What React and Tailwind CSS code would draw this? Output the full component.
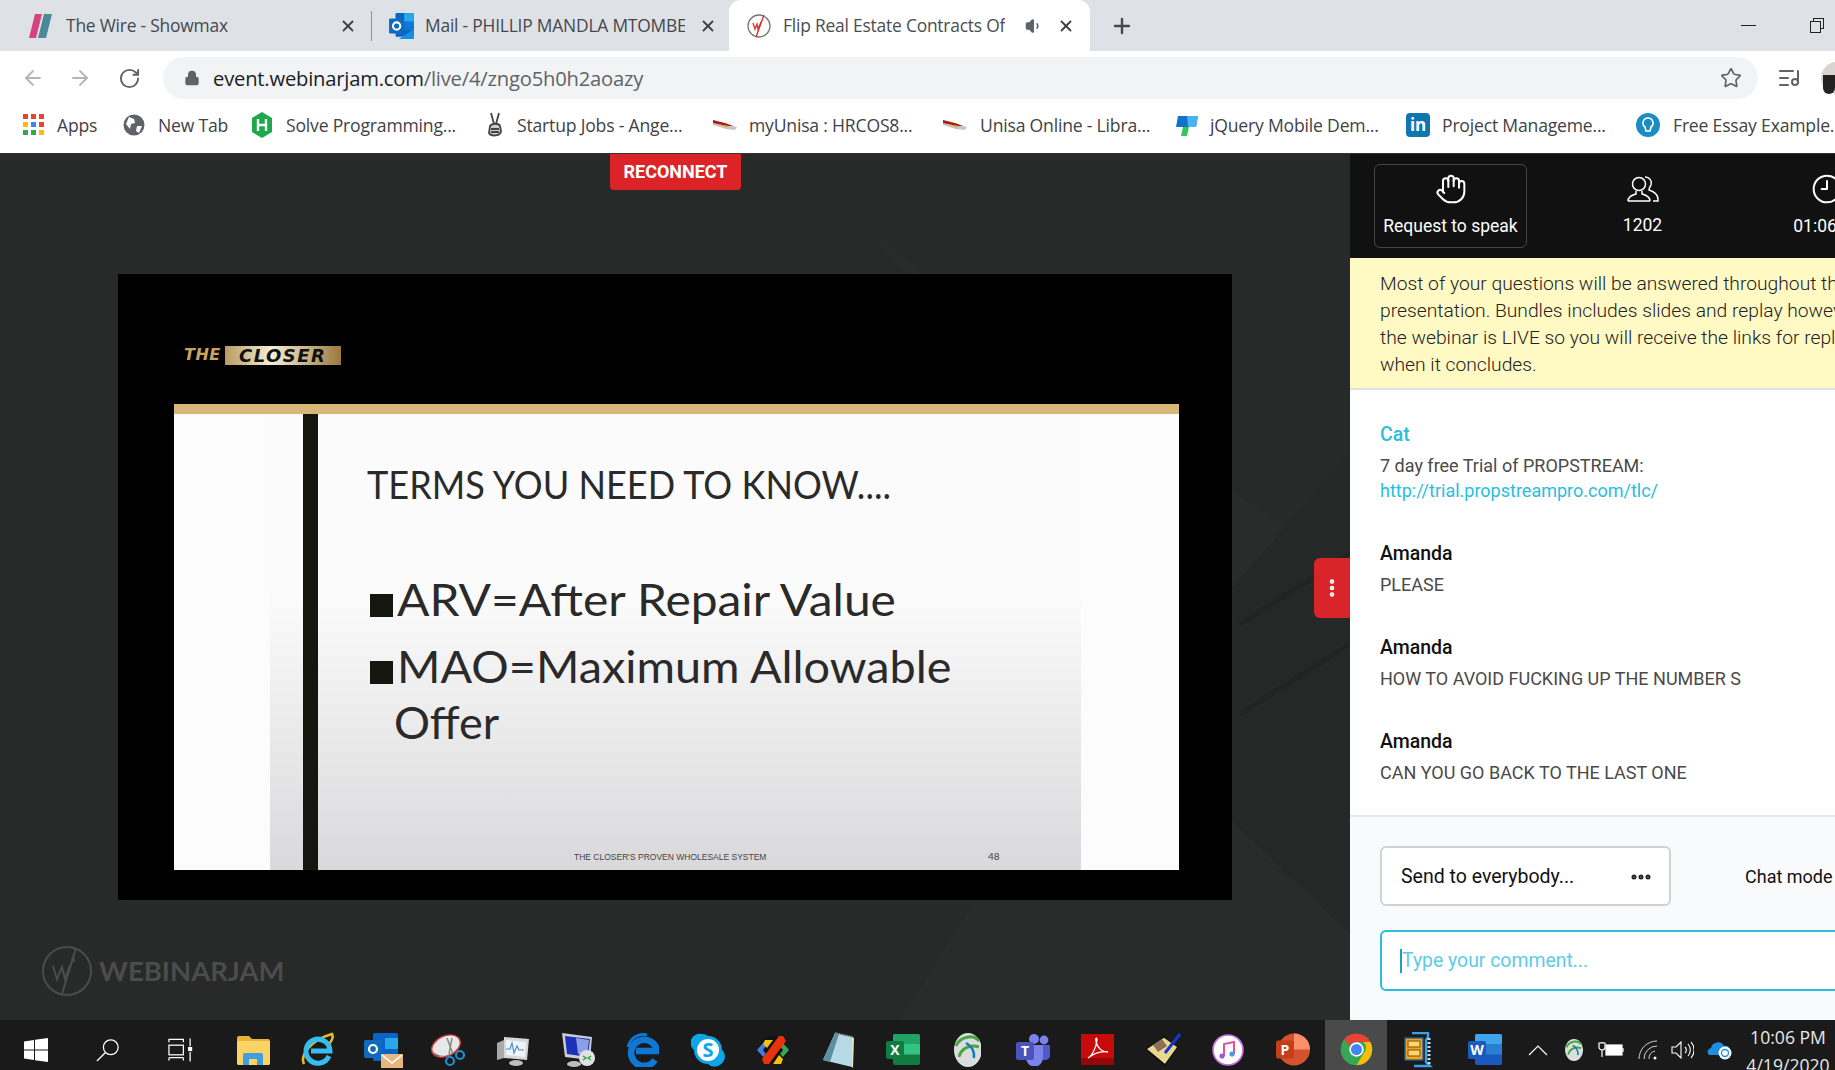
import { ArrowLeft, ArrowRight, RotateCw, Lock, Star, X, Plus, Volume1, ListMusic, EllipsisVertical, Ellipsis, Hand, Clock9 } from 'lucide-react';

const ui = { fontFamily: '"Open Sans", sans-serif' };

const ShowmaxIcon = () => (
  <svg width="28" height="26" viewBox="0 0 28 26">
    <path d="M7 1h7L8 25H1z" fill="#d8437f" />
    <path d="M16 1h8l-6 24h-8z" fill="#4a8a96" />
  </svg>
);

const OutlookIcon = ({ size = 28 }) => (
  <svg width={size} height={size} viewBox="0 0 26 26">
    <rect x="7" y="1" width="17" height="22" rx="1" fill="#0a64c8" />
    <rect x="15" y="1" width="9" height="8" fill="#28a8ea" />
    <rect x="15" y="9" width="9" height="8" fill="#0f78d4" />
    <rect x="1" y="6" width="14" height="14" rx="1" fill="#0f6cbd" />
    <circle cx="8" cy="13" r="3.4" fill="none" stroke="#fff" strokeWidth="2" />
    <path d="M10 25l14-9v9z" fill="#1490df" />
  </svg>
);

const JamFavicon = () => (
  <svg width="26" height="26" viewBox="0 0 26 26" fill="none">
    <circle cx="13" cy="13" r="11" stroke="#777" strokeWidth="1.3" />
    <path d="M18 2L10 24" stroke="#d9332b" strokeWidth="1.4" />
    <path d="M7 10l2 6 2-5 1 5 3-7" stroke="#d9332b" strokeWidth="1.3" />
  </svg>
);

const AppsIcon = () => {
  const colors = ['#ea4335', '#ea4335', '#ea4335', '#fbbc05', '#4285f4', '#ea4335', '#34a853', '#34a853', '#fbbc05'];
  return (
    <div className="grid grid-cols-3 gap-[3px]">
      {colors.map((c, i) => (
        <div key={i} className="h-[5px] w-[5px]" style={{ backgroundColor: c }} />
      ))}
    </div>
  );
};

const GlobeIcon = () => (
  <svg width="22" height="22" viewBox="0 0 22 22">
    <circle cx="11" cy="11" r="10.5" fill="#5f6368" />
    <path d="M6 3l5 2 1 4-4 1-1 5-4-5zM14 12l5 0-3 7-3-2z" fill="#fff" />
  </svg>
);

const HackerrankIcon = () => (
  <svg width="22" height="26" viewBox="0 0 22 26">
    <path d="M11 0l10 6v14l-10 6-10-6V6z" fill="#1ba94c" />
    <path d="M7 7v12M15 7v12M7 13h8" stroke="#fff" strokeWidth="2.4" />
  </svg>
);

const PeaceIcon = () => (
  <svg width="20" height="28" viewBox="0 0 20 28" fill="none" stroke="#444" strokeWidth="1.8">
    <path d="M6 2l3 11M14 2l-3 11" />
    <path d="M5 15c2-3 9-3 10 0l1 5c0 5-10 6-12 2z" fill="#cfcfcf" />
    <path d="M6 18h8M6 21h8" />
  </svg>
);

const UnisaIcon = () => (
  <svg width="26" height="14" viewBox="0 0 26 14">
    <path d="M1 3l9 2 15 4-2 3-9-1-13-4z" fill="#c9c5c5" />
    <path d="M1 2l12 3 8 3-6 0-14-3z" fill="#a51c1c" />
    <path d="M5 6l12 2-3 1z" fill="#d9a520" />
  </svg>
);

const JqueryIcon = () => (
  <svg width="24" height="24" viewBox="0 0 24 24">
    <path d="M3 3h20l-2 11H1z" fill="#1173c5" />
    <path d="M12 3h11l-2 11h-8z" fill="#49b3f0" />
    <path d="M8 14h6l-2 9H6z" fill="#34c759" />
  </svg>
);

const LinkedinIcon = () => (
  <div className="flex h-6 w-6 items-center justify-center rounded-sm bg-[#0f76b0] text-[17px] font-bold leading-none text-white" style={ui}>
    in
  </div>
);

const BulbIcon = () => (
  <svg width="24" height="24" viewBox="0 0 24 24" fill="none">
    <circle cx="12" cy="12" r="12" fill="#1c8dc4" />
    <path d="M12 5a5 5 0 0 0-3 9l1 4h4l1-4a5 5 0 0 0-3-9z" stroke="#fff" strokeWidth="1.6" />
  </svg>
);

const WjLogo = ({ size = 50, color = '#4b4c4c' }) => (
  <svg width={size} height={size} viewBox="0 0 50 50" fill="none" stroke={color} strokeWidth="2">
    <circle cx="25" cy="25" r="24" />
    <path d="M34 2L20 48" />
    <path d="M11 20l4 13 5-12 3 12 5-14" />
    <circle cx="31" cy="14" r="1.2" fill={color} />
  </svg>
);

const PeopleIcon = () => (
  <svg width="34" height="30" viewBox="0 0 34 30" fill="none" stroke="#fff" strokeWidth="1.5">
    <circle cx="13" cy="10" r="6.5" />
    <path d="M2 27c0-5 5-6 8-7v-3M24 27c0-5-5-6-8-7v-3M2 27h22" />
    <path d="M19 3a6 6 0 0 1 6 8c-1 2-2 3-2 5 3 1 9 3 9 9v2h-5" />
  </svg>
);

const Tile = ({ children }) => (
  <div className="flex h-[50px] w-[65px] shrink-0 items-center justify-center pt-[9px]">{children}</div>
);

// Taskbar app icons, all drawn on a 36 box
const Folder = () => (
  <svg width="34" height="30" viewBox="0 0 34 30">
    <path d="M1 3a2 2 0 0 1 2-2h10l3 3h16a2 2 0 0 1 2 2v22a2 2 0 0 1-2 2H3a2 2 0 0 1-2-2z" fill="#e8b23c" />
    <rect x="1" y="6" width="33" height="24" rx="2" fill="#fad365" />
    <path d="M7 30V20a2 2 0 0 1 2-2h16a2 2 0 0 1 2 2v10h-6v-6h-8v6z" fill="#3f9fe3" />
  </svg>
);
const IeIcon = () => (
  <svg width="36" height="36" viewBox="0 0 36 36" fill="none">
    <path d="M4 32C0 24 10 8 32 2c2 3-1 8-3 10" stroke="#e8b923" strokeWidth="2.6" />
    <path d="M29 24a12 12 0 1 1 1-5H11" stroke="#35bdf0" strokeWidth="5" />
  </svg>
);
const OutlookTask = () => (
  <svg width="40" height="36" viewBox="0 0 40 36">
    <rect x="10" y="1" width="25" height="28" rx="2" fill="#0a64c8" />
    <rect x="22" y="6" width="13" height="11" fill="#28a8ea" />
    <rect x="1" y="8" width="18" height="18" rx="2" fill="#0f6cbd" />
    <circle cx="10" cy="17" r="4" fill="none" stroke="#fff" strokeWidth="2.2" />
    <rect x="18" y="22" width="22" height="14" fill="#e8b77e" />
    <path d="M19 23l10 8 10-8" fill="none" stroke="#fff" strokeWidth="1.6" />
  </svg>
);
const Snip = () => (
  <svg width="34" height="36" viewBox="0 0 34 36" fill="none">
    <ellipse cx="15" cy="14" rx="15" ry="10" transform="rotate(-25 15 14)" fill="#e8e8e8" stroke="#d33b3b" strokeWidth="1.4" />
    <path d="M1 18c4 6 12 8 20 3l-3 3H5z" fill="#6e6e6e" />
    <path d="M16 6l6 16M21 6l-3 16" stroke="#888" strokeWidth="1.5" />
    <circle cx="19" cy="29" r="4" stroke="#1f8fd0" strokeWidth="2.2" />
    <circle cx="29" cy="23" r="4" stroke="#1f8fd0" strokeWidth="2.2" />
  </svg>
);
const PerfMon = () => (
  <svg width="34" height="32" viewBox="0 0 34 32" fill="none">
    <path d="M8 3l25 2-2 21-23-2z" fill="#d5d8da" />
    <path d="M10 6l20 2-1 15-19-2z" fill="#eef4f8" />
    <path d="M10 15l4 0 2-6 2 10 3-7 2 4 5 0" stroke="#4b8ec8" strokeWidth="1.2" />
    <path d="M1 9l7-3v18l-7 2z" fill="#aaa" />
    <ellipse cx="20" cy="29" rx="7" ry="3" fill="#bdbdbd" />
  </svg>
);
const Rdp = () => (
  <svg width="36" height="36" viewBox="0 0 36 36">
    <path d="M2 1l30 4-2 23-25-3z" fill="#c9cdd2" />
    <path d="M5 4l25 3-2 18-21-3z" fill="#1c2fb8" />
    <path d="M16 6l13 2-2 16-9-2z" fill="#8ba0e4" />
    <ellipse cx="14" cy="32" rx="7" ry="3" fill="#bdbdbd" />
    <circle cx="27" cy="26" r="8" fill="#dfe3df" />
    <path d="M23 24l3 2-3 2M31 24l-3 2 3 2" stroke="#2f9e44" strokeWidth="1.4" fill="none" />
  </svg>
);
const EdgeIcon = () => (
  <svg width="32" height="34" viewBox="0 0 32 34" fill="none">
    <path d="M28 27a13 13 0 1 1 2-9H9" stroke="#0f78d4" strokeWidth="6.5" />
    <path d="M1 14C4 4 12 0 20 2" stroke="#0f78d4" strokeWidth="3" />
  </svg>
);
const SkypeIcon = () => (
  <svg width="34" height="34" viewBox="0 0 34 34">
    <path d="M10 1a9 9 0 0 1 7 2 14 14 0 0 1 14 14 9 9 0 0 1-1 14 9 9 0 0 1-13 0A14 14 0 0 1 3 17 9 9 0 0 1 10 1z" fill="#0fa5e9" />
    <circle cx="17" cy="17" r="11" fill="#fff" />
    <text x="17" y="24" textAnchor="middle" fontSize="20" fontWeight="700" fill="#0fa5e9" style={ui}>S</text>
  </svg>
);
const MultiIcon = () => (
  <svg width="36" height="30" viewBox="0 0 36 30">
    <circle cx="18" cy="15" r="14" fill="#111" />
    <path d="M2 15l6-7 3 3-3 4 3 4-3 3z" fill="#3f7ce0" />
    <path d="M34 15l-6-7-3 3 3 4-3 4 3 3z" fill="#35a853" />
    <path d="M10 5h8l-6 8-4-4zM18 29h8l2-5-4-4z" fill="#f4c20d" />
    <path d="M24 1h4l3 5-17 23H9l-2-5z" fill="#e8320e" />
  </svg>
);
const NotepadIcon = () => (
  <svg width="34" height="36" viewBox="0 0 34 36">
    <path d="M14 1l18 4-1 30L2 28z" fill="#b7dbe6" />
    <path d="M2 28L14 1l4 1L9 30z" fill="#5d8fa3" />
    <path d="M31 5l2 1-1 30-1-1z" fill="#e3e3c8" />
    <path d="M14 1l18 4" stroke="#888" strokeWidth="2" strokeDasharray="1 1" />
  </svg>
);
const OfficeIcon = ({ letter, tints, badge }) => (
  <svg width="36" height="33" viewBox="0 0 36 33">
    <rect x="8" y="1" width="27" height="31" rx="2" fill={tints[2]} />
    <rect x="8" y="1" width="27" height="10.5" rx="2" fill={tints[0]} />
    <rect x="8" y="11" width="27" height="10.5" fill={tints[1]} />
    <rect x="1" y="8" width="18" height="18" rx="2" fill={badge} />
    <text x="10" y="22" textAnchor="middle" fontSize="14" fontWeight="700" fill="#fff" style={ui}>{letter}</text>
  </svg>
);
const AvayaGlobe = ({ size = 34 }) => (
  <svg width={size * 0.82} height={size} viewBox="0 0 28 34" fill="none">
    <ellipse cx="14" cy="17" rx="14" ry="17" fill="#d9dee0" />
    <path d="M2 13C6 3 20 1 25 8M5 24c2-8 10-13 20-10" stroke="#4aa63d" strokeWidth="3" />
    <path d="M12 10c5 2 9 8 8 15" stroke="#1a78b8" strokeWidth="2.4" />
  </svg>
);
const TeamsIcon = () => (
  <svg width="36" height="32" viewBox="0 0 36 32">
    <circle cx="29" cy="6" r="4.4" fill="#7b83eb" />
    <circle cx="19" cy="5" r="5" fill="#7b83eb" />
    <path d="M24 11h11v9a5 5 0 0 1-8 5z" fill="#5059c9" />
    <path d="M11 11h17v13a8 8 0 0 1-17 0z" fill="#7b83eb" />
    <rect x="1" y="8" width="18" height="18" rx="2" fill="#4b53bc" />
    <text x="10" y="22" textAnchor="middle" fontSize="14" fontWeight="700" fill="#fff" style={ui}>T</text>
  </svg>
);
const AcrobatIcon = () => (
  <svg width="33" height="31" viewBox="0 0 33 31" fill="none">
    <rect width="33" height="31" fill="#c80a0a" />
    <rect y="24" width="33" height="7" fill="#950606" />
    <path d="M7 24c4-2 8-10 9-18 0-3-2-2-1 1 1 7 6 11 12 11-5-1-12 0-20 6z" stroke="#fff" strokeWidth="1.3" />
  </svg>
);
const NotesIcon = () => (
  <svg width="36" height="36" viewBox="0 0 36 36">
    <path d="M1 17L19 5l14 10-13 18z" fill="#e8d98c" stroke="#111" strokeWidth="1.4" />
    <path d="M8 13l9-6 5 7-9 6z" fill="#8c6f5b" />
    <path d="M20 21L35 2" stroke="#1537c9" strokeWidth="3" />
    <path d="M4 20l16 13" stroke="#111" strokeWidth="1.6" />
  </svg>
);
const ItunesIcon = () => (
  <svg width="32" height="32" viewBox="0 0 32 32" fill="none">
    <circle cx="16" cy="16" r="15" fill="#fff" stroke="#c46ee0" strokeWidth="1.6" />
    <path d="M12 22V10l10-2v12" stroke="#e24fa0" strokeWidth="2" />
    <circle cx="10" cy="22" r="2.6" fill="#9a5ae0" />
    <circle cx="20" cy="20" r="2.6" fill="#3f9fe8" />
  </svg>
);
const PptIcon = () => (
  <svg width="36" height="33" viewBox="0 0 36 33">
    <circle cx="19" cy="16.5" r="16" fill="#d35230" />
    <path d="M19 .5a16 16 0 0 1 16 16H19z" fill="#ff8f6b" />
    <rect x="1" y="7.5" width="18" height="18" rx="2" fill="#c43e1c" />
    <text x="10" y="21.5" textAnchor="middle" fontSize="14" fontWeight="700" fill="#fff" style={ui}>P</text>
  </svg>
);
const ChromeIcon = () => (
  <svg width="33" height="33" viewBox="0 0 48 48">
    <circle cx="24" cy="24" r="23" fill="#34a853" />
    <path d="M24 1a23 23 0 0 1 20 12H24a11 11 0 0 0-10 6L6 9A23 23 0 0 1 24 1z" fill="#ea4335" />
    <path d="M44 13a23 23 0 0 1-20 34l10-17a11 11 0 0 0 0-17z" fill="#fbbc05" />
    <circle cx="24" cy="24" r="10.5" fill="#fff" />
    <circle cx="24" cy="24" r="8" fill="#4285f4" />
  </svg>
);
const ZipIcon = () => (
  <svg width="32" height="36" viewBox="0 0 32 36" fill="none">
    <rect x="1" y="6" width="18" height="22" fill="#f0a818" stroke="#1f5fa8" strokeWidth="1.4" />
    <rect x="4" y="9" width="12" height="6" fill="#f7d96a" stroke="#8a4a12" />
    <rect x="4" y="18" width="12" height="6" fill="#f7d96a" stroke="#8a4a12" />
    <path d="M8 1h16v4l-2 3v22l4 4H10" stroke="#3f9fe3" strokeWidth="2.4" />
    <path d="M25 6v26" stroke="#bde0f7" strokeWidth="3" strokeDasharray="2 2" />
  </svg>
);

const Tab = ({ width, children, active }) => (
  <div className={`flex h-[51px] shrink-0 items-center ${width} ${active ? 'rounded-t-xl bg-white' : ''}`}>{children}</div>
);

const bookmarks = [
  { icon: <AppsIcon />, label: 'Apps', iconBox: 'w-[21px]', gap: 'ml-[13px]', width: 'w-[100px]' },
  { icon: <GlobeIcon />, label: 'New Tab', iconBox: 'w-[22px]', gap: 'ml-[13px]', width: 'w-[128px]' },
  { icon: <HackerrankIcon />, label: 'Solve Programming...', iconBox: 'w-[22px]', gap: 'ml-[13px]', width: 'w-[234px]' },
  { icon: <PeaceIcon />, label: 'Startup Jobs - Ange...', iconBox: 'w-[20px]', gap: 'ml-[12px]', width: 'w-[227px]' },
  { icon: <UnisaIcon />, label: 'myUnisa : HRCOS8...', iconBox: 'w-[26px]', gap: 'ml-[11px]', width: 'w-[230px]' },
  { icon: <UnisaIcon />, label: 'Unisa Online - Libra...', iconBox: 'w-[26px]', gap: 'ml-[12px]', width: 'w-[233px]' },
  { icon: <JqueryIcon />, label: 'jQuery Mobile Dem...', iconBox: 'w-[24px]', gap: 'ml-[11px]', width: 'w-[231px]' },
  { icon: <LinkedinIcon />, label: 'Project Manageme...', iconBox: 'w-[24px]', gap: 'ml-[12px]', width: 'w-[230px]' },
  { icon: <BulbIcon />, label: 'Free Essay Example...', iconBox: 'w-[24px]', gap: 'ml-[13px]', width: 'w-[190px]' },
];

const messages = [
  { name: 'Amanda', text: 'PLEASE' },
  { name: 'Amanda', text: 'HOW TO AVOID FUCKING UP THE NUMBER S' },
  { name: 'Amanda', text: 'CAN YOU GO BACK TO THE LAST ONE' },
];

const apps = [
  <Folder />, <IeIcon />, <OutlookTask />, <Snip />, <PerfMon />, <Rdp />, <EdgeIcon />, <SkypeIcon />, <MultiIcon />, <NotepadIcon />,
  <OfficeIcon letter="X" tints={['#21a366', '#33c481', '#107c41']} badge="#107c41" />,
  <AvayaGlobe />, <TeamsIcon />, <AcrobatIcon />, <NotesIcon />, <ItunesIcon />, <PptIcon />,
];

export default function App() {
  return (
    <div className="flex h-[1070px] w-[1835px] flex-col overflow-hidden bg-white" style={{ fontFamily: '"Open Sans", sans-serif' }}>
      {/* tab strip */}
      <div className="flex h-[51px] shrink-0 items-center bg-[#dee1e6] text-[17.4px] tracking-[-0.2px] text-[#45484d]">
        <Tab width="w-[371px] pl-[28px]">
          <ShowmaxIcon />
          <span className="ml-[10px] flex-1 truncate">The Wire - Showmax</span>
          <X size={18} strokeWidth={2.4} className="mr-[14px] text-[#3c4043]" />
        </Tab>
        <div className="h-[30px] w-px shrink-0 bg-[#8f9297]" />
        <Tab width="w-[357px] pl-[16px]">
          <OutlookIcon />
          <span className="ml-[9px] w-[260px] overflow-hidden whitespace-nowrap">Mail - PHILLIP MANDLA MTOMBENI</span>
          <X size={18} strokeWidth={2.4} className="ml-[14px] text-[#3c4043]" />
        </Tab>
        <Tab active width="w-[361px] pl-[17px] text-[#4a4d52]">
          <JamFavicon />
          <span className="ml-[11px] w-[222px] overflow-hidden whitespace-nowrap">Flip Real Estate Contracts Of</span>
          <Volume1 size={18} fill="#5f6368" className="ml-[20px] text-[#5f6368]" />
          <X size={18} strokeWidth={2.4} className="ml-[14px] text-[#3c4043]" />
        </Tab>
        <Plus size={24} strokeWidth={2.4} className="ml-[20px] text-[#45484d]" />
        <div className="ml-auto mr-[11px] flex items-center gap-[54px]">
          <div className="h-px w-[15px] bg-[#222]" />
          <div className="relative h-[15px] w-[14px]">
            <div className="absolute right-0 top-0 h-[11px] w-[11px] border border-[#222]" />
            <div className="absolute bottom-0 left-0 h-[12px] w-[11px] border border-[#222] bg-[#dee1e6]" />
          </div>
        </div>
      </div>

      {/* toolbar */}
      <div className="flex h-[52px] shrink-0 items-center bg-white pt-[2px]">
        <ArrowLeft size={24} strokeWidth={1.8} className="ml-[21px] shrink-0 text-[#b3b5b8]" />
        <ArrowRight size={24} strokeWidth={1.8} className="ml-[23px] shrink-0 text-[#b3b5b8]" />
        <RotateCw size={23} strokeWidth={2} className="ml-[26px] shrink-0 text-[#5f6368]" />
        <div className="ml-[22px] flex h-[42px] w-[1595px] shrink-0 items-center rounded-full bg-[#f1f3f4] pl-[21px] pr-[16px] text-[20.2px] tracking-[-0.2px]">
          <Lock size={16} fill="#5f6368" className="text-[#5f6368]" />
          <span className="ml-[13px] text-[#202124]">event.webinarjam.com</span>
          <span className="text-[#5f6368]">/live/4/zngo5h0h2aoazy</span>
          <Star size={22} strokeWidth={1.8} className="ml-auto text-[#5f6368]" />
        </div>
        <ListMusic size={24} strokeWidth={2} className="ml-[19px] shrink-0 text-[#5f6368]" />
        <div className="ml-[20px] h-[32px] w-[32px] shrink-0 rounded-full bg-[#d9d4d4]">
          <div className="ml-[2px] mt-[13px] h-[19px] w-[12px] rounded-b-md bg-[#222]" />
        </div>
      </div>

      {/* bookmarks */}
      <div className="flex h-[51px] shrink-0 items-center overflow-hidden border-b border-[#333] bg-white pb-[6px] pl-[23px] text-[17.6px] tracking-[-0.2px] text-[#3f4246]">
        {bookmarks.map((b) => (
          <div key={b.label} className={`flex shrink-0 items-center ${b.width}`}>
            <div className={`flex shrink-0 items-center justify-center ${b.iconBox}`}>{b.icon}</div>
            <span className={`${b.gap} whitespace-nowrap`}>{b.label}</span>
          </div>
        ))}
      </div>

      {/* page */}
      <div className="flex min-h-0 flex-1">
        <div className="relative min-w-0 flex-1 bg-[#282929] pl-[118px] pt-[120px]">
          <svg className="absolute inset-0 h-full w-full" viewBox="0 0 1350 866" preserveAspectRatio="none">
            <path d="M870 80L1350 420V866H900L1180 420z" fill="#2a2b2b" />
            <path d="M1350 300L1120 560L1350 780z" fill="#262727" />
            <path d="M1240 470L1350 400M1240 560L1350 490" stroke="#222323" strokeWidth="5" />
          </svg>

          <div className="absolute left-[610px] top-0 flex h-[36px] w-[131px] items-center justify-center rounded-b bg-[#dc2428] pb-[1px] text-[18px] font-bold text-white" style={{ fontFamily: 'Roboto, sans-serif' }}>
            RECONNECT
          </div>

          {/* video */}
          <div className="relative h-[626px] w-[1114px] bg-black pl-[56px] pt-[32px]">
            <div className="flex h-[564px] w-[1005px] flex-col">
              <div className="flex h-[98px] shrink-0 items-center pl-[10px]">
                <span className="text-[16px] font-extrabold italic tracking-[0.5px] text-[#c9a560]" style={{ fontFamily: '"DejaVu Sans", sans-serif' }}>
                  THE
                </span>
                <span className="ml-[4px] h-[19px] w-[116px] bg-gradient-to-r from-[#b89a60] via-[#f5f0d8] via-40% to-[#9a7a3c] text-center text-[18px] font-extrabold italic leading-[19px] tracking-[1.5px] text-[#111]" style={{ fontFamily: '"DejaVu Sans", sans-serif' }}>
                  CLOSER
                </span>
              </div>
              <div className="h-[10px] shrink-0 bg-[#d8b878]" />
              <div className="flex min-h-0 flex-1 bg-[#fcfcfc]" style={{ fontFamily: 'Lato, sans-serif' }}>
                <div className="w-[96px] shrink-0" />
                <div className="flex flex-1 bg-gradient-to-b from-[#fbfbfb] from-40% to-[#d9d9db]">
                  <div className="ml-[33px] w-[15px] shrink-0 bg-[#15160f]" />
                  <div className="relative flex-1 pl-[49px] pt-[47px] text-[#2a2a2a]">
                    <div className="origin-left scale-x-[0.925] whitespace-nowrap text-[39px] leading-[46px]">TERMS YOU NEED TO KNOW....</div>
                    <div className="mt-[66px] ml-[3px] flex items-center whitespace-nowrap text-[45px] leading-[52px]">
                      <span className="mr-[4px] mt-[12px] h-[23px] w-[23px] bg-[#15160f]" />
                      <span className="origin-left scale-x-[1.065]">ARV=After Repair Value</span>
                    </div>
                    <div className="mt-[15px] ml-[3px] flex items-center whitespace-nowrap text-[45px] leading-[52px]">
                      <span className="mr-[4px] mt-[12px] h-[23px] w-[23px] bg-[#15160f]" />
                      <span className="origin-left scale-x-[1.04]">MAO=Maximum Allowable</span>
                    </div>
                    <div className="ml-[27px] mt-[4px] text-[45px] leading-[52px]">Offer</div>
                    <div className="absolute bottom-[6px] left-[256px] whitespace-nowrap text-[8.5px] text-[#444]" style={{ fontFamily: '"Liberation Sans", sans-serif' }}>THE CLOSER'S PROVEN WHOLESALE SYSTEM</div>
                    <div className="absolute bottom-[6px] left-[670px] text-[10px] text-[#444]">48</div>
                  </div>
                </div>
                <div className="w-[98px] shrink-0" />
              </div>
            </div>
          </div>

          {/* watermark */}
          <div className="absolute left-[42px] top-[792px] flex items-center">
            <WjLogo />
            <span className="ml-[7px] text-[27.5px] font-bold text-[#4b4c4c]" style={{ fontFamily: 'Lato, sans-serif' }}>
              WEBINARJAM
            </span>
          </div>

          <div className="absolute right-0 top-[404px] flex h-[60px] w-[36px] items-center justify-center rounded-l-md bg-[#d9242a] text-white">
            <EllipsisVertical size={22} strokeWidth={3} />
          </div>
        </div>

        {/* chat panel */}
        <div className="w-[485px] shrink-0 overflow-hidden bg-white" style={{ fontFamily: 'Roboto, sans-serif' }}>
          <div className="flex h-full w-[640px] flex-col">
            <div className="flex h-[104px] shrink-0 items-center bg-[#111111] pl-[24px] text-white">
              <div className="flex h-[84px] w-[153px] flex-col items-center justify-center rounded-md border border-[#444] pb-[3px]">
                <Hand size={32} strokeWidth={1.5} />
                <span className="mt-[10px] text-[17.5px] leading-[22px]">Request to speak</span>
              </div>
              <div className="ml-[58px] flex w-[115px] flex-col items-center pb-[2px]">
                <PeopleIcon />
                <span className="mt-[10px] text-[17.5px] leading-[22px]">1202</span>
              </div>
              <div className="ml-[87px] flex w-[80px] flex-col items-center pb-[3px]">
                <Clock9 size={32} strokeWidth={1.5} />
                <span className="mt-[10px] whitespace-nowrap text-[17.5px] leading-[22px]">01:06:14</span>
              </div>
            </div>

            <div className="h-[132px] shrink-0 border-b-2 border-[#e2e2e2] bg-[#fff9c4] pl-[30px] pt-[12px] text-[19.25px] font-light leading-[27px] text-[#222]">
              <p className="whitespace-nowrap">Most of your questions will be answered throughout the</p>
              <p className="whitespace-nowrap">presentation. Bundles includes slides and replay however</p>
              <p className="whitespace-nowrap">the webinar is LIVE so you will receive the links for replay</p>
              <p className="whitespace-nowrap">when it concludes.</p>
            </div>

            <div className="flex h-[425px] shrink-0 flex-col pl-[30px] pt-[32px]">
              <div className="text-[19.5px] font-medium leading-[26px] text-[#29bde0]">Cat</div>
              <div className="mt-[5px] text-[18px] leading-[26px] text-[#4a4a4a]">7 day free Trial of PROPSTREAM:</div>
              <div className="text-[18px] leading-[24px] text-[#29bde0]">http://trial.propstreampro.com/tlc/</div>
              <div className="mt-[38px] flex flex-col gap-[37px]">
                {messages.map((m) => (
                  <div key={m.text}>
                    <div className="text-[19.5px] leading-[26px] text-[#111]" style={{ fontWeight: 500 }}>{m.name}</div>
                    <div className="mt-[5px] text-[18px] leading-[26px] text-[#4a4a4a]">{m.text}</div>
                  </div>
                ))}
              </div>
            </div>

            <div className="flex-1 border-t-2 border-[#e6e7e9] bg-[#f9fafb] pl-[30px] pt-[29px]">
              <div className="flex items-center">
                <div className="flex h-[60px] w-[291px] items-center justify-between rounded-md border-2 border-[#cfd3d9] bg-white pl-[19px] pr-[16px] pt-[1px] text-[19.5px] text-[#111]">
                  <span>Send to everybody...</span>
                  <Ellipsis size={24} strokeWidth={3} className="text-[#222]" />
                </div>
                <span className="ml-[74px] whitespace-nowrap text-[18px] text-[#111]">Chat mode</span>
              </div>
              <div className="mt-[24px] flex h-[61px] w-[600px] items-center rounded-md border-2 border-[#29bde0] bg-white pl-[18px] pt-[1px] text-[19.4px] text-[#5ccbe8]">
                <span className="h-[24px] w-[2px] bg-[#1b9fc4]" />
                <span>Type your comment...</span>
              </div>
            </div>
          </div>
        </div>
      </div>

      {/* taskbar */}
      <div className="flex h-[50px] shrink-0 items-center bg-[#1a1a1a] text-white">
        <div className="flex w-[220px] shrink-0 items-center pt-[9px]">
          <svg className="ml-[24px]" width="24" height="24" viewBox="0 0 24 24" fill="#fff">
            <path d="M0 3.5L10 2v9.5H0zM11 1.8L24 0v11.5H11zM0 12.5h10V22L0 20.5zM11 12.5h13V24l-13-1.8z" />
          </svg>
          <svg className="ml-[48px]" width="24" height="24" viewBox="0 0 26 26" fill="none" stroke="#fff" strokeWidth="1.4">
            <circle cx="16" cy="10" r="8" />
            <path d="M10 16L1 25" />
          </svg>
          <svg className="ml-[48px]" width="25" height="24" viewBox="0 0 26 24" fill="none" stroke="#fff" strokeWidth="1.3">
            <path d="M1 4V1h15v3M1 20v3M16 20v3M1 20h15" />
            <rect x="1" y="7" width="15" height="10" />
            <path d="M23 0v8M23 14v10" />
            <rect x="21.5" y="9.5" width="3" height="3" fill="#fff" />
          </svg>
        </div>
        {apps.map((icon, i) => (
          <Tile key={i}>{icon}</Tile>
        ))}
        <div className="flex h-[50px] w-[62px] shrink-0 items-center justify-center bg-[#4a4a4a] pt-[9px]">
          <ChromeIcon />
        </div>
        <Tile><ZipIcon /></Tile>
        <Tile><OfficeIcon letter="W" tints={['#41a5ee', '#2b7cd3', '#185abd']} badge="#185abd" /></Tile>

        {/* tray */}
        <div className="ml-[11px] flex items-center pt-[9px]">
          <svg width="20" height="12" viewBox="0 0 20 12" fill="none" stroke="#fff" strokeWidth="1.2"><path d="M1 11l9-9 9 9" /></svg>
          <div className="ml-[17px]"><AvayaGlobe size={22} /></div>
          <svg className="ml-[15px]" width="26" height="16" viewBox="0 0 26 16" fill="none" stroke="#fff" strokeWidth="1.2">
            <path d="M1 1h6v4a3 3 0 0 1-6 0zM4 8v7M3 0v1M5 0v1" />
            <rect x="8" y="3" width="16" height="10" fill="#fff" />
            <path d="M25 6v4" />
          </svg>
          <svg className="ml-[14px]" width="20" height="20" viewBox="0 0 20 20" fill="none" stroke="#cfcfcf" strokeWidth="1">
            <path d="M1 19A18 18 0 0 1 19 1M6 19A13 13 0 0 1 19 6M11 19a8 8 0 0 1 6-8" />
            <circle cx="17" cy="18" r="1.5" fill="#fff" stroke="none" />
          </svg>
          <svg className="ml-[13px]" width="23" height="20" viewBox="0 0 23 20" fill="none" stroke="#fff" strokeWidth="1.1">
            <path d="M1 7h4l5-5v16l-5-5H1zM14 7a4 4 0 0 1 0 6M17 4a9 9 0 0 1 0 12M20 2a12 12 0 0 1 0 16" />
          </svg>
          <svg className="ml-[13px]" width="25" height="20" viewBox="0 0 25 20">
            <path d="M2 15a4 4 0 0 1 2-7 7 7 0 0 1 13-2 5 5 0 0 1 4 9z" fill="#1f8ee0" />
            <circle cx="18" cy="13" r="6.5" fill="#fff" />
            <circle cx="18" cy="13" r="3.5" fill="none" stroke="#1f8ee0" strokeWidth="1.4" />
          </svg>
        </div>
        <div className="ml-[12px] flex h-[50px] w-[88px] shrink-0 flex-col items-center overflow-hidden whitespace-nowrap pt-[3px] text-[17.6px] leading-[28px] text-[#e8e8e8]">
          <span>10:06 PM</span>
          <span>4/19/2020</span>
        </div>
      </div>
    </div>
  );
}
